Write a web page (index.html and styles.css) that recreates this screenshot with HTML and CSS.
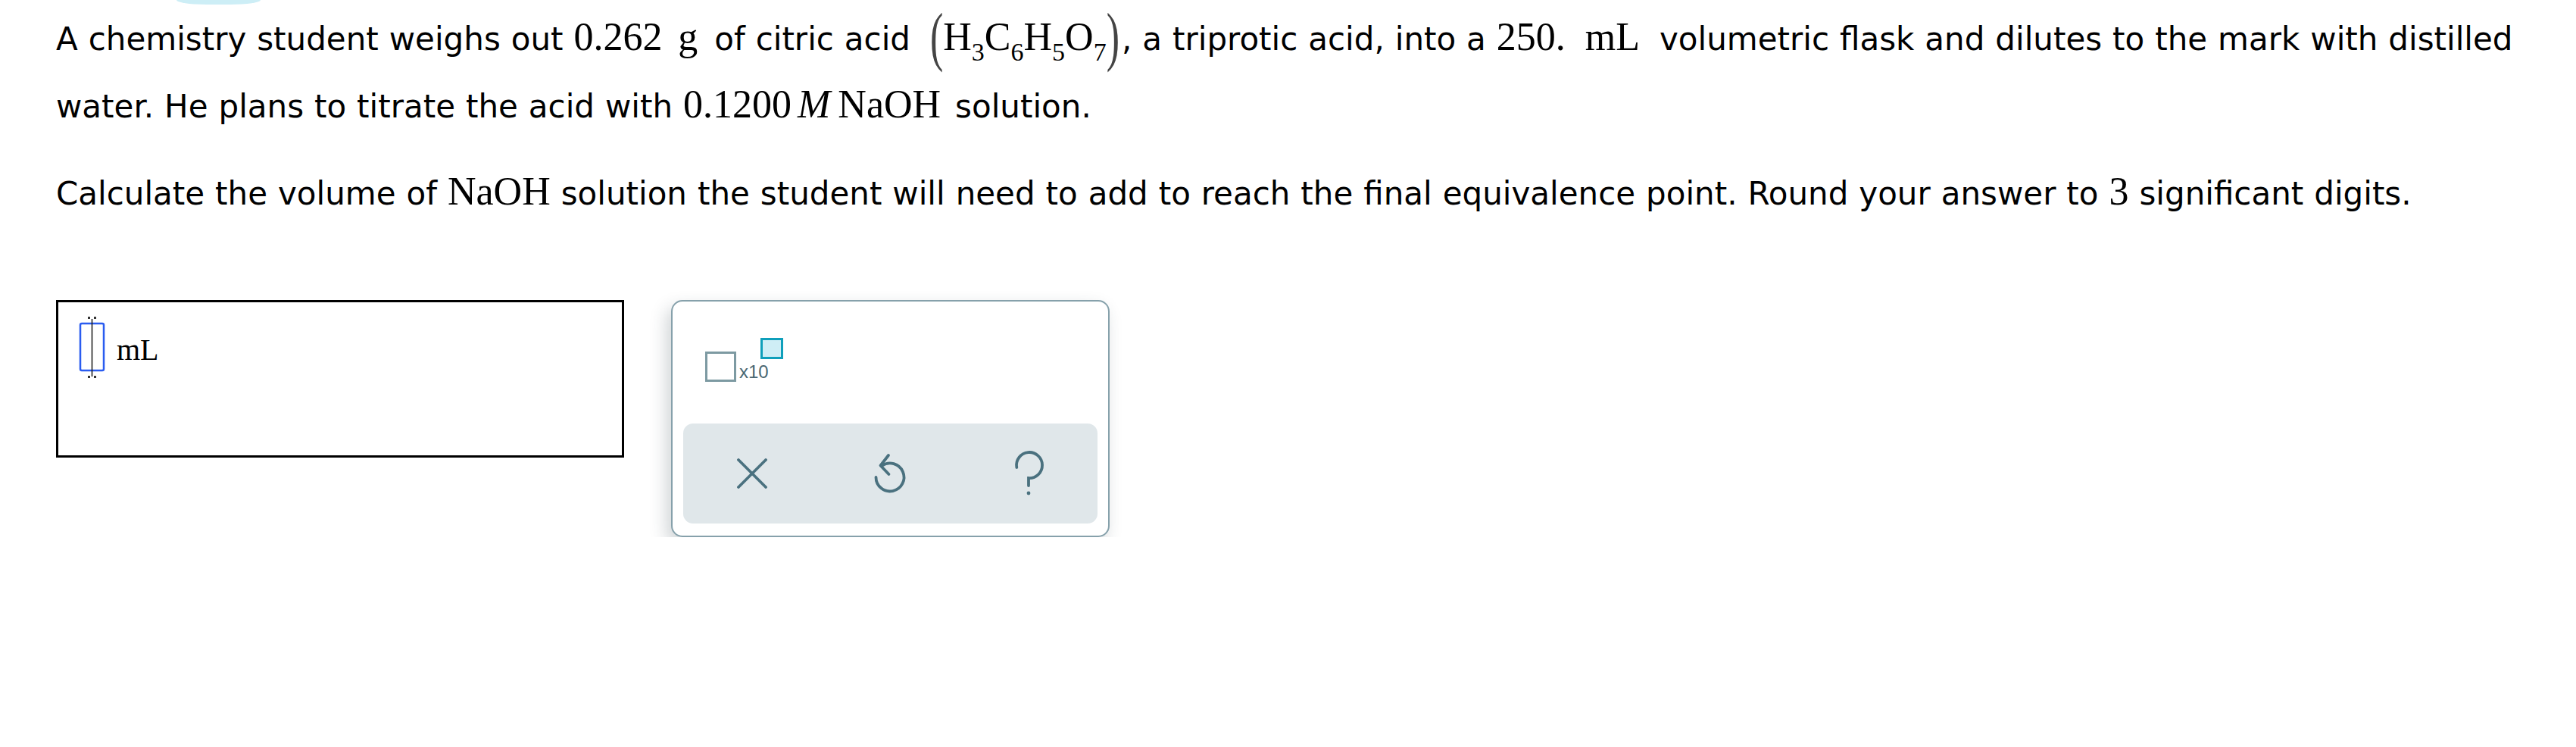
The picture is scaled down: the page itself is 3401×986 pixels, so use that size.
FILE: index.html
```html
<!DOCTYPE html>
<html lang="en">
<head>
<meta charset="utf-8">
<title>Citric acid titration</title>
<link rel="stylesheet" href="styles.css">
</head>
<body>
<div class="tab"></div>
<div class="question">
  <p class="para">A chemistry student weighs out <span class="m">0.262<span class="u">g</span></span> of citric acid <span class="m formula"><span class="paren">(</span>H<span class="s">3</span>C<span class="s">6</span>H<span class="s">5</span>O<span class="s">7</span><span class="paren">)</span></span>, a triprotic acid, into a <span class="m">250.<span class="u u-wide">mL</span></span> volumetric flask and dilutes to the mark with distilled<br>water. He plans to titrate the acid with <span class="m conc">0.1200<i class="mi">M</i><span class="u2">NaOH</span></span> solution.</p>
  <p class="para">Calculate the volume of <span class="m">NaOH</span> solution the student will need to add to reach the final equivalence point. Round your answer to <span class="m">3</span> significant digits.</p>
</div>
<div class="answer-row">
  <div class="answer-box">
    <svg class="cursor" width="36" height="84" viewBox="0 0 36 84">
      <rect x="2" y="10" width="31" height="62" rx="2" fill="#fff" stroke="#2a5cf0" stroke-width="2.5"/>
      <line x1="17.5" y1="4" x2="17.5" y2="80" stroke="#222" stroke-width="1.6"/>
      <rect x="12" y="1" width="3" height="3" fill="#333"/>
      <rect x="20" y="1" width="3" height="3" fill="#333"/>
      <rect x="12" y="79" width="3" height="3" fill="#333"/>
      <rect x="20" y="79" width="3" height="3" fill="#333"/>
    </svg>
    <span class="unit">mL</span>
  </div>
  <div class="panel">
    <div class="sci">
      <span class="sq-base"></span>
      <span class="x10">x10</span>
      <span class="sq-exp"></span>
    </div>
    <div class="bar">
      <span class="btn">
        <svg width="40" height="40" viewBox="0 0 40 40" fill="none" stroke="#4a717f" stroke-width="3.8" stroke-linecap="round">
          <line x1="2" y1="2" x2="38" y2="38"/>
          <line x1="38" y1="2" x2="2" y2="38"/>
        </svg>
      </span>
      <span class="btn">
        <svg width="48" height="58" viewBox="0 0 48 58" fill="none" stroke="#4a717f" stroke-width="3.8" stroke-linecap="round" stroke-linejoin="round">
          <path d="M5.5 34 A18.5 18.5 0 1 0 13.4 18.8"/>
          <path d="M22 5 L11.5 18.5 L22.5 30"/>
        </svg>
      </span>
      <span class="btn">
        <svg width="44" height="63" viewBox="0 0 44 63" fill="none" stroke="#4a717f" stroke-width="3.8" stroke-linecap="round">
          <path d="M6.3 23 A17 17 0 1 1 22 37 L22 47"/>
          <circle cx="22" cy="57" r="2.4" fill="#4a717f" stroke="none"/>
        </svg>
      </span>
    </div>
  </div>
</div>
</body>
</html>
```

FILE: styles.css
```css
html, body {
  margin: 0;
  padding: 0;
  background: #fff;
}

body {
  font-family: "DejaVu Sans", Verdana, sans-serif;
  font-size: 42px;
  word-spacing: 0.6px;
  color: #000;
}

.tab {
  width: 111px;
  height: 6px;
  margin-left: 233px;
  background: #cdeef6;
  border-radius: 0 0 40px 40px / 0 0 6px 6px;
}

.question {
  padding-left: 74px;
  padding-top: 1px;
}

.para {
  margin: 0;
  line-height: 89px;
  white-space: nowrap;
}

.para + .para {
  margin-top: 26px;
}

.m {
  font-family: "Liberation Serif", "Times New Roman", serif;
  font-size: 52px;
  line-height: 1;
  word-spacing: 0;
}

.u {
  margin-left: 0.4em;
  margin-right: 8px;
}

.u-wide {
  margin-left: 0.5em;
  margin-right: 12px;
}

.conc {
  margin-right: 5px;
}

.mi {
  font-style: italic;
  margin-left: 8px;
}

.u2 {
  margin-left: 10px;
}

.formula {
  margin-left: 12px;
  margin-right: 3px;
}

.paren {
  display: inline-block;
  line-height: 1;
  color: #444;
  transform: scaleY(1.65);
}

.s {
  font-size: 34px;
  line-height: 0;
  vertical-align: -14px;
}

.answer-row {
  display: flex;
  align-items: flex-start;
  gap: 62px;
  margin-top: 96px;
  padding-left: 74px;
}

.answer-box {
  box-sizing: border-box;
  width: 750px;
  height: 208px;
  border: 3px solid #000;
  display: flex;
  align-items: flex-start;
  padding-left: 27px;
}

.cursor {
  display: block;
  margin-top: 18px;
}

.unit {
  font-family: "Liberation Serif", "Times New Roman", serif;
  font-size: 40px;
  line-height: 1;
  margin-top: 43px;
  margin-left: 14px;
}

.panel {
  box-sizing: border-box;
  width: 579px;
  height: 313px;
  border: 2px solid #86a1ab;
  border-radius: 15px;
  box-shadow: -6px 10px 22px rgba(40, 60, 70, 0.22);
  padding: 0 14px 16px;
  display: flex;
  flex-direction: column;
  background: #fff;
}

.sci {
  display: flex;
  align-items: flex-end;
  height: 58px;
  margin: 48px 0 0 29px;
}

.sq-base {
  box-sizing: border-box;
  width: 41px;
  height: 40px;
  border: 3.5px solid #7d9aa2;
  background: #fff;
}

.x10 {
  font-family: "Liberation Sans", Arial, sans-serif;
  font-size: 24px;
  line-height: 1;
  color: #4a6772;
  margin-left: 4px;
  margin-bottom: 1px;
}

.sq-exp {
  box-sizing: border-box;
  align-self: flex-start;
  width: 30px;
  height: 28px;
  margin-left: -11px;
  border: 3px solid #0f9fbb;
  background: #cfeef6;
}

.bar {
  margin-top: auto;
  height: 132px;
  background: #e0e7ea;
  border-radius: 13px;
  display: grid;
  grid-template-columns: repeat(3, 1fr);
  align-items: center;
  justify-items: center;
}

.btn {
  display: flex;
  align-items: center;
  justify-content: center;
}

.btn svg {
  display: block;
}
```
